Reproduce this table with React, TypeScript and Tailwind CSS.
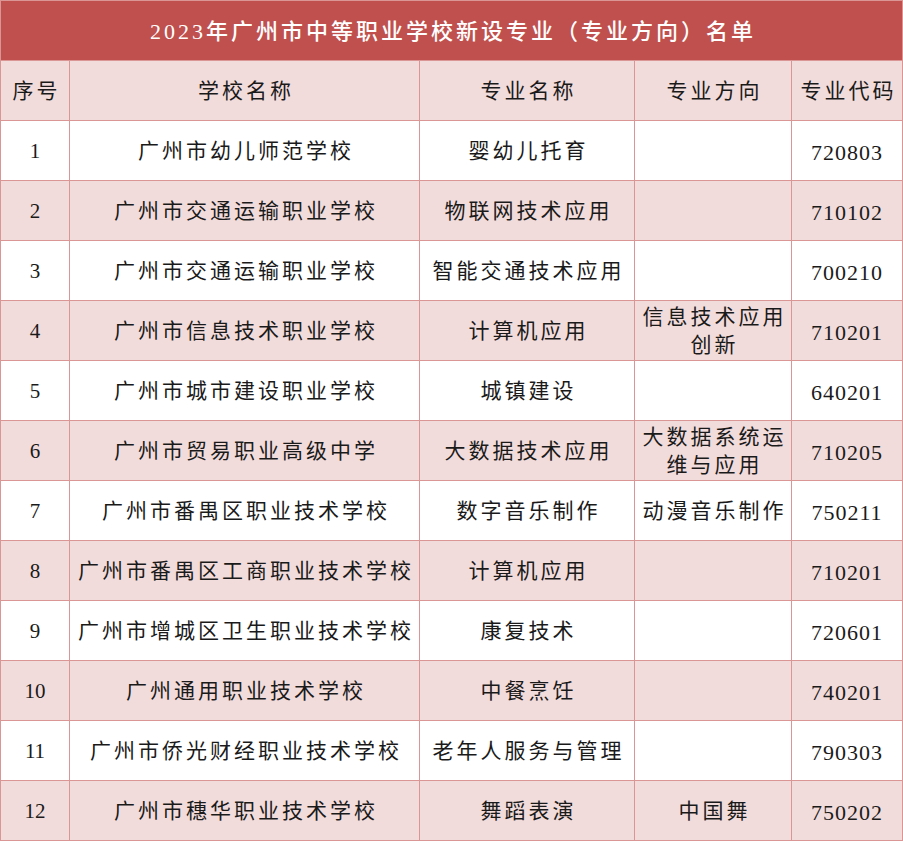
const rows: [string, string, string, string[], string][] = [
    ['1', '广州市幼儿师范学校', '婴幼儿托育', [], '720803'],
    ['2', '广州市交通运输职业学校', '物联网技术应用', [], '710102'],
    ['3', '广州市交通运输职业学校', '智能交通技术应用', [], '700210'],
    ['4', '广州市信息技术职业学校', '计算机应用', ['信息技术应用', '创新'], '710201'],
    ['5', '广州市城市建设职业学校', '城镇建设', [], '640201'],
    ['6', '广州市贸易职业高级中学', '大数据技术应用', ['大数据系统运', '维与应用'], '710205'],
    ['7', '广州市番禺区职业技术学校', '数字音乐制作', ['动漫音乐制作'], '750211'],
    ['8', '广州市番禺区工商职业技术学校', '计算机应用', [], '710201'],
    ['9', '广州市增城区卫生职业技术学校', '康复技术', [], '720601'],
    ['10', '广州通用职业技术学校', '中餐烹饪', [], '740201'],
    ['11', '广州市侨光财经职业技术学校', '老年人服务与管理', [], '790303'],
    ['12', '广州市穗华职业技术学校', '舞蹈表演', ['中国舞'], '750202'],
];

const font = { fontFamily: '"Liberation Serif", "Noto Sans CJK SC", serif' };

export default function App() {
    return (
        <div className="w-[903px] h-[842px] bg-white" style={font}>
            <table className="table-fixed border-collapse w-[902px] text-[#1a1a1a]">
                <colgroup>
                    <col className="w-[69px]" />
                    <col className="w-[350px]" />
                    <col className="w-[215px]" />
                    <col className="w-[157px]" />
                    <col className="w-[111px]" />
                </colgroup>
                <tbody>
                    <tr className="h-[60px] bg-[#c0504d]">
                        <td
                            colSpan={5}
                            className="border border-[#d99694] text-center text-white text-[22px] font-medium tracking-[3px] pl-[3px] pt-[2px]"
                        >
                            2023年广州市中等职业学校新设专业（专业方向）名单
                        </td>
                    </tr>
                    <tr className="h-[60px] bg-[#f2dcdb] text-[21px] tracking-[3px]">
                        {['序号', '学校名称', '专业名称', '专业方向', '专业代码'].map((h) => (
                            <td key={h} className="border border-[#d99694] text-center pl-[3px] pt-[3px] whitespace-nowrap">
                                {h}
                            </td>
                        ))}
                    </tr>
                    {rows.map(([no, school, major, dir, code], i) => (
                        <tr key={no} className={`h-[60px] ${i % 2 === 1 ? 'bg-[#f2dcdb]' : 'bg-white'}`}>
                            <td className="border border-[#d99694] text-center text-[21px] pt-[3px]">{no}</td>
                            <td className="border border-[#d99694] text-center text-[21px] tracking-[3px] pl-[3px] pt-[3px] whitespace-nowrap">
                                {school}
                            </td>
                            <td className="border border-[#d99694] text-center text-[21px] tracking-[3px] pl-[3px] pt-[3px] whitespace-nowrap">
                                {major}
                            </td>
                            <td className="border border-[#d99694] text-center text-[21px] tracking-[3px] pl-[3px] pt-[1px] leading-[28px] whitespace-nowrap">
                                {dir.map((l) => (
                                    <div key={l}>{l}</div>
                                ))}
                            </td>
                            <td className="border border-[#d99694] text-center text-[22px] tracking-[1px] pt-[3px]">{code}</td>
                        </tr>
                    ))}
                </tbody>
            </table>
        </div>
    );
}
